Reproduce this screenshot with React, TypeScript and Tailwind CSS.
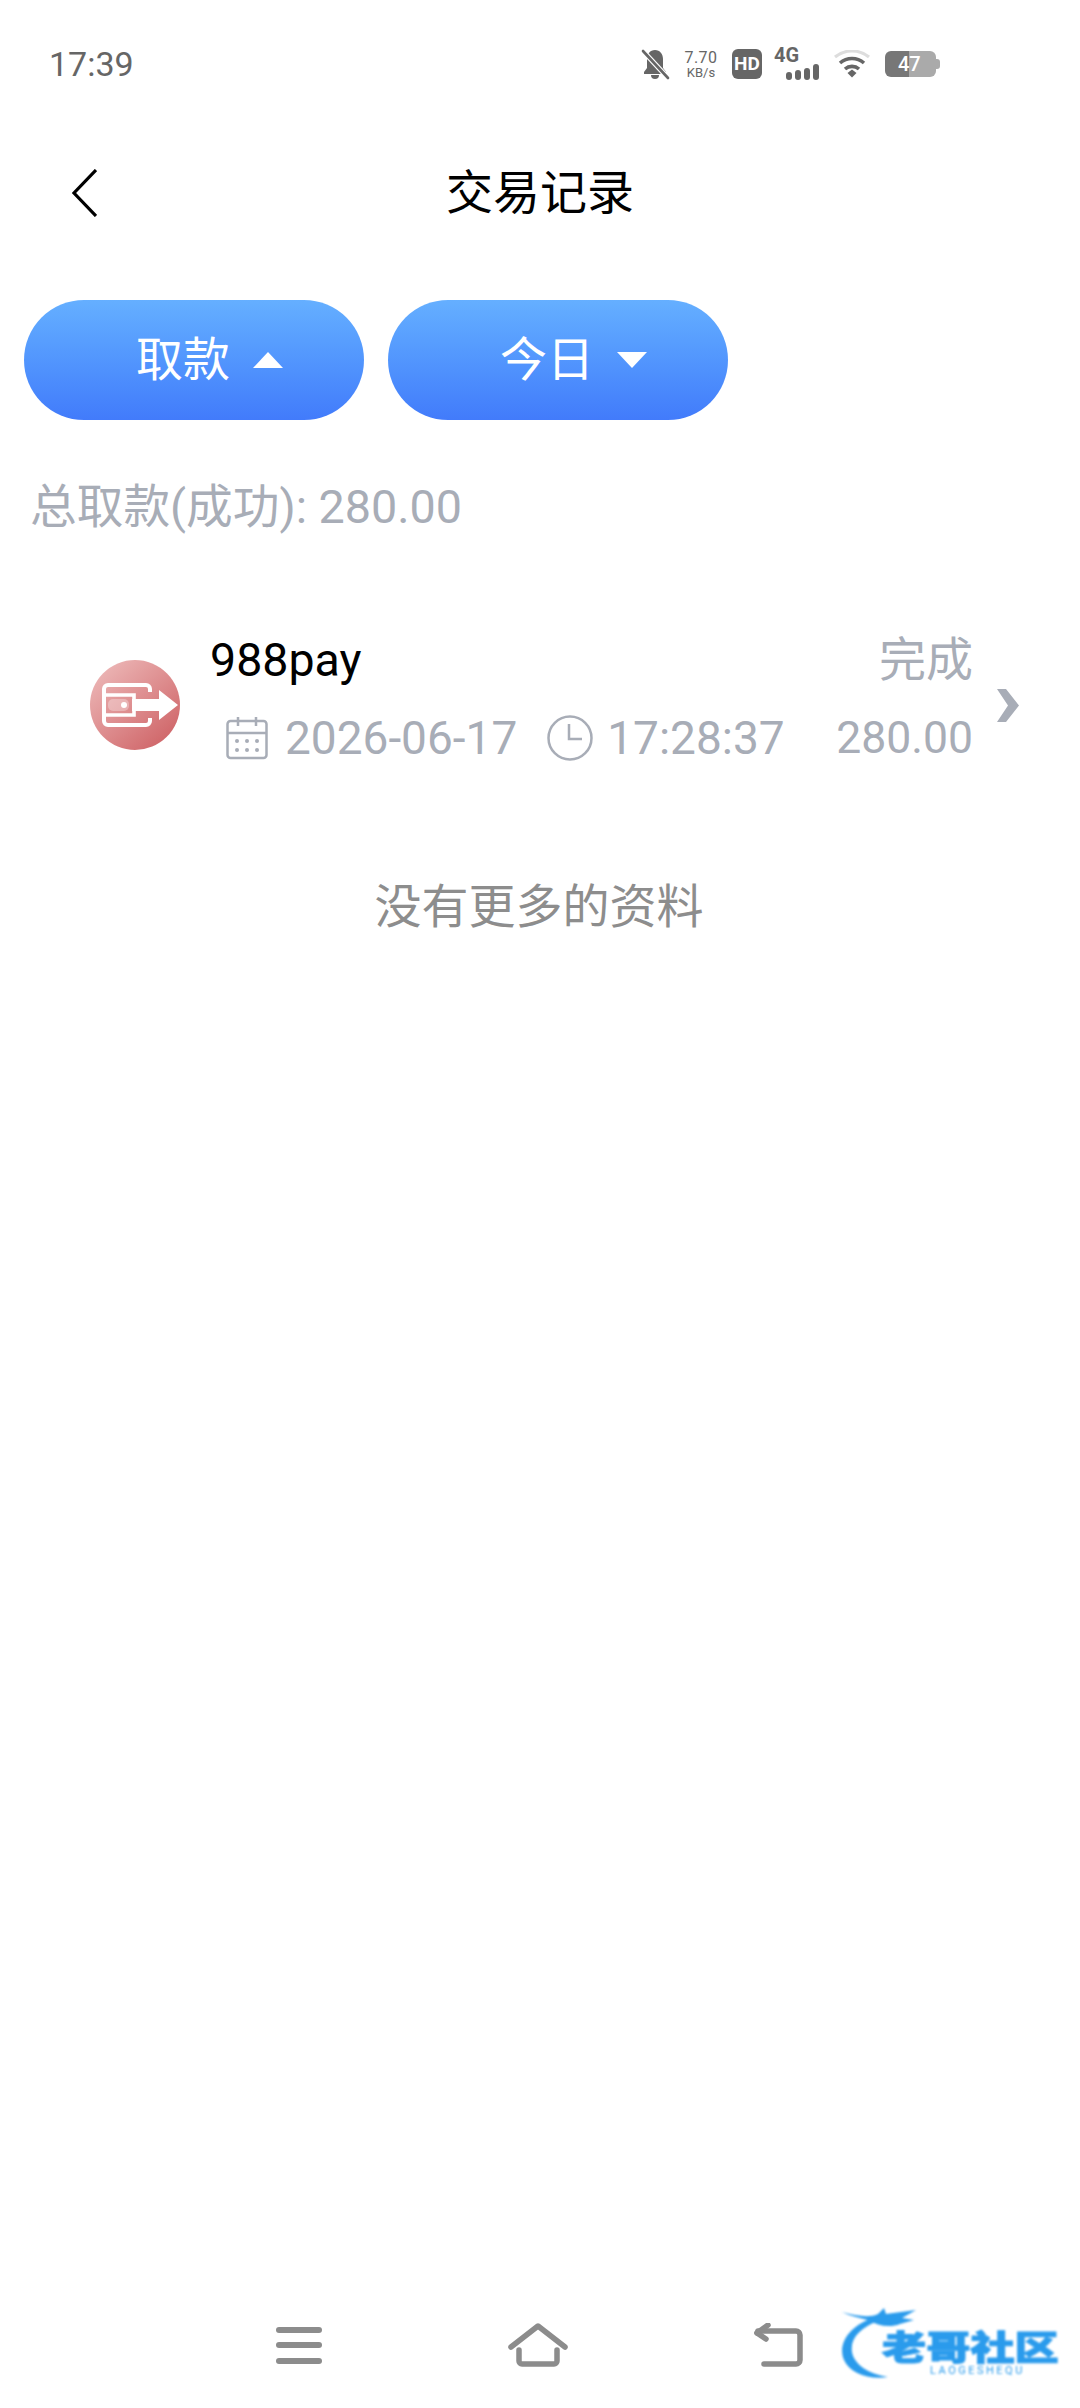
import React from 'react';

const font = 'font-["Roboto","Noto_Sans_CJK_SC",sans-serif]';

function StatusIcons() {
  return (
    <div className="flex items-center h-[32px] mr-[140px] text-[#666]">
      <svg width="29" height="31" viewBox="0 0 29 31" className="mr-[13px]">
        <path d="M14 1c5 0 8 4 8 9v9l3 4v2H3v-2l3-4v-9c0-5 3-9 8-9z" fill="#666" />
        <path d="M10 26h8a4 4 0 0 1-8 0z" fill="#666" />
        <path d="M2 2l25 27" stroke="#fff" strokeWidth="5" />
        <path d="M2 2l25 27" stroke="#666" strokeWidth="2.6" strokeLinecap="round" />
      </svg>
      <div className="flex flex-col items-center w-[36px] mr-[13px] leading-none">
        <span className="text-[16px] leading-[17px] tracking-[0.5px]">7.70</span>
        <span className="text-[13px] leading-[14px]">KB/s</span>
      </div>
      <div className="w-[30px] h-[30px] rounded-[6px] bg-[#666] text-white text-[19px] leading-[30px] font-bold text-center mr-[12px]">
        HD
      </div>
      <div className="relative w-[47px] h-[32px] mr-[13px]">
        <span className="absolute left-0 top-[-3px] text-[20px] leading-[20px] font-bold">4G</span>
        <div className="absolute left-[12px] bottom-[0px] flex items-end gap-[3px]">
          <div className="w-[6px] h-[8px] rounded-[3px] bg-[#666]" />
          <div className="w-[6px] h-[10px] rounded-[3px] bg-[#666]" />
          <div className="w-[6px] h-[12px] rounded-[3px] bg-[#666]" />
          <div className="w-[6px] h-[16px] rounded-[3px] bg-[#666]" />
        </div>
      </div>
      <svg width="36" height="28" viewBox="0 0 36 28" className="mr-[15px]">
        <path d="M1 7c10-8 24-8 34 0" fill="none" stroke="#dddddd" strokeWidth="3.2" />
        <path d="M6 13c7-6 17-6 24 0" fill="none" stroke="#666" strokeWidth="3.6" />
        <path d="M11 19c4-3.5 10-3.5 14 0" fill="none" stroke="#666" strokeWidth="3.6" />
        <path d="M13.5 23l4.5-3.5 4.500 3.500-4.500 4.500z" fill="#666" />
      </svg>
      <div className="relative flex w-[55px] h-[26px] items-center">
        <div className="w-[24px] h-[26px] rounded-l-[6px] bg-[#777]" />
        <div className="w-[27px] h-[26px] rounded-r-[6px] bg-[#aaa]" />
        <div className="w-[4px] h-[10px] rounded-r-[3px] bg-[#aaa]" />
        <span className="absolute left-[13px] top-0 text-white text-[20px] leading-[26px] font-medium">47</span>
      </div>
    </div>
  );
}

function FilterButton({ label, up }: { label: string; up?: boolean }) {
  return (
    <button className="flex items-center pl-[112px] w-[340px] h-[120px] rounded-full bg-gradient-to-b from-[#65afff] to-[#427bfb] text-white text-[47px]">
      <span>{label}</span>
      <svg width="32" height="18" viewBox="0 0 32 18" className="ml-[22px]">
        {up ? <path d="M16 1l15 16H1z" fill="#fff" /> : <path d="M1 1h30L16 17z" fill="#fff" />}
      </svg>
    </button>
  );
}

function WalletBadge() {
  return (
    <svg width="90" height="90" viewBox="0 0 90 90">
      <defs>
        <linearGradient id="badge" x1="0.15" y1="0.1" x2="0.85" y2="0.9">
          <stop offset="0" stopColor="#ebb3b3" />
          <stop offset="1" stopColor="#d0676a" />
        </linearGradient>
      </defs>
      <circle cx="45" cy="45" r="45" fill="url(#badge)" />
      <path
        d="M60 32v-3a4 4 0 0 0-4-4H18a4 4 0 0 0-4 4v32a4 4 0 0 0 4 4h38a4 4 0 0 0 4-4v-3"
        fill="none"
        stroke="#fff"
        strokeWidth="4"
      />
      <path d="M15 35h29v6M15 55h29v-6" fill="none" stroke="#fff" strokeWidth="3.600" />
      <rect x="18" y="39" width="21" height="12" rx="5" fill="#fff" opacity="0.3" />
      <circle cx="34" cy="45" r="3" fill="#fff" />
      <path d="M42 39h27V30l19 15-19 15v-9H42z" fill="#fff" />
    </svg>
  );
}

function CalendarIcon() {
  return (
    <svg width="42" height="44" viewBox="0 0 42 44" fill="none" stroke="#a8adb7" strokeWidth="2.500">
      <rect x="1.500" y="5" width="39" height="37" rx="3" />
      <path d="M1.500 17h39M12 1v9M30 1v9" />
      <g fill="#a8adb7" stroke="none">
        <circle cx="11" cy="25" r="2" />
        <circle cx="21" cy="25" r="2" />
        <circle cx="31" cy="25" r="2" />
        <circle cx="11" cy="34" r="2" />
        <circle cx="21" cy="34" r="2" />
        <circle cx="31" cy="34" r="2" />
      </g>
    </svg>
  );
}

function ClockIcon() {
  return (
    <svg width="46" height="46" viewBox="0 0 46 46" fill="none" stroke="#a8adb7" strokeWidth="2.500">
      <circle cx="23" cy="23" r="21.500" />
      <path d="M22 9v15h13" />
    </svg>
  );
}

function Watermark() {
  return (
    <div className="absolute left-[838px] top-[2306px] w-[236px] h-[80px] blur-[1px]">
      <svg width="110" height="80" viewBox="0 0 110 80" className="absolute left-0 top-0">
        <path
          d="M34 12C8 22 0 40 6 54c6 13 24 20 44 17C30 68 16 58 14 46 12 32 22 22 42 14z"
          fill="#2a9bec"
        />
        <path d="M4 6c14 4 28 6 36 2l6-6 2 6 30-4-14 8 12 2-14 4c-10 4-22 2-32-4C22 12 12 10 4 6z" fill="#2a9bec" />
      </svg>
      <span className="absolute left-[44px] top-[22px] w-[180px] text-[34px] leading-[40px] font-black text-[#2a9bec] [-webkit-text-stroke:1px_#2a9bec] whitespace-nowrap origin-left scale-x-[1.3]">
        老哥社区
      </span>
      <span className="absolute left-[92px] top-[58px] text-[11px] leading-[14px] tracking-[2.500px] text-[#2a9bec] whitespace-nowrap">
        LAOGESHEQU
      </span>
    </div>
  );
}

export default function App() {
  return (
    <div className={`relative flex flex-col w-[1080px] h-[2408px] bg-white overflow-hidden ${font}`}>
      <div className="flex items-center justify-between h-[128px] pl-[49px]">
        <span className="text-[34px] text-[#666]">17:39</span>
        <StatusIcons />
      </div>

      <div className="relative flex items-center justify-center h-[130px]">
        <svg width="26" height="48" viewBox="0 0 26 48" className="absolute left-[71px]" fill="none" stroke="#000" strokeWidth="3.200">
          <path d="M25 1L3 24l22 23" />
        </svg>
        <h1 className="text-[47px] text-black font-normal">交易记录</h1>
      </div>

      <div className="flex gap-[24px] pl-[24px] mt-[42px]">
        <FilterButton label="取款" up />
        <FilterButton label="今日" />
      </div>

      <div className="mt-[56px] pl-[30px] text-[46.700px] leading-[62px] text-[#a8adb7]">总取款(成功): 280.00</div>

      <div className="flex items-center mt-[92px] pl-[90px]">
        <WalletBadge />
        <div className="w-[763px] ml-[30px] pb-[12px]">
          <div className="flex items-center justify-between h-[60px]">
            <span className="text-black text-[46.500px] pt-[2px]">988pay</span>
            <span className="text-[#a8adb7] text-[47px]">完成</span>
          </div>
          <div className="flex items-center h-[60px] mt-[18px] pl-[16px] text-[46px] text-[#a8adb7]">
            <CalendarIcon />
            <span className="ml-[17px]">2026-06-17</span>
            <span className="ml-[30px]">
              <ClockIcon />
            </span>
            <span className="ml-[14px]">17:28:37</span>
            <span className="ml-auto text-[44.500px]">280.00</span>
          </div>
        </div>
        <svg width="22" height="33" viewBox="0 0 22 33" className="ml-[24px]">
          <path d="M0 0h9l13 16.500L9 33H0l11-16.500z" fill="#a8adb7" />
        </svg>
      </div>

      <div className="mt-[96px] pr-[2px] text-center text-[47px] leading-[62px] text-[#8d8d8d]">没有更多的资料</div>

      <div className="flex items-center justify-center gap-[182px] mt-auto mb-[41px] pr-[1px] text-[#8c8c8c]">
        <svg width="46" height="37" viewBox="0 0 46 37" fill="#8c8c8c" className="mr-[2px]">
          <rect x="0" y="0" width="46" height="6" rx="3" />
          <rect x="0" y="15" width="46" height="6" rx="3" />
          <rect x="0" y="31" width="46" height="6" rx="3" />
        </svg>
        <svg width="60" height="44" viewBox="0 0 60 44" fill="none" stroke="#8c8c8c" strokeWidth="5.500" strokeLinecap="round" className="ml-[2px]">
          <path d="M3 24L30 3l27 21" strokeLinejoin="round" />
          <path d="M11 27v11a3 3 0 0 0 3 3h32a3 3 0 0 0 3-3V27" />
        </svg>
        <svg width="52" height="44" viewBox="0 0 52 44" fill="none" stroke="#8c8c8c" strokeWidth="5.500" strokeLinecap="round" className="ml-[2px]">
          <path d="M6 8h38a4 4 0 0 1 4 4v25a4 4 0 0 1-4 4H12" />
          <path d="M16 2L5 10" />
          <path d="M5 10l9 6" />
        </svg>
      </div>

      <Watermark />
    </div>
  );
}
